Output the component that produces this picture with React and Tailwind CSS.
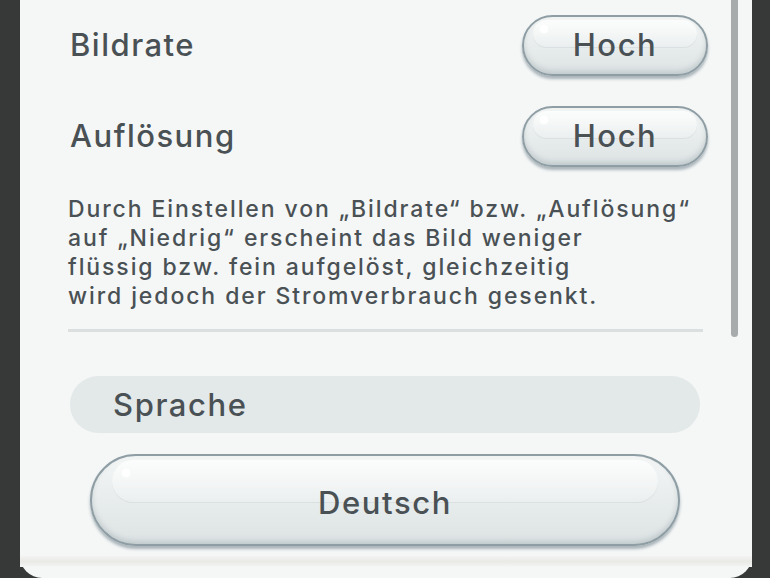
import React from "react";

const font = { fontFamily: 'Inter, "Liberation Sans", Arial, sans-serif' };

function Pill({ className, children, textClass, bandClass, dotClass }) {
  return (
    <div
      className={
        "relative flex items-center justify-center rounded-full border-2 border-[#8e9ea4] bg-[linear-gradient(180deg,#f4f6f6_0%,#eaeeee_40%,#dde3e4_100%)] shadow-[0_3px_3px_rgba(80,100,110,0.45),inset_0_-3px_5px_rgba(140,155,160,0.35)] " +
        className
      }
    >
      <div
        className={
          "pointer-events-none absolute top-[3px] h-[48%] rounded-full bg-[linear-gradient(180deg,rgba(255,255,255,0.7),rgba(255,255,255,0.15))] shadow-[0_1px_0_rgba(205,213,215,0.5)] " +
          bandClass
        }
      />
      <div
        className={
          "pointer-events-none absolute h-[8px] w-[8px] rounded-full bg-white shadow-[0_0_2px_rgba(255,255,255,0.9)] " +
          dotClass
        }
      />
      <span className={"relative font-medium text-[#4a5155] " + textClass} style={font}>
        {children}
      </span>
    </div>
  );
}

export default function App() {
  return (
    <div className="h-[578px] w-[770px] overflow-hidden bg-[#363938]">
      <div className="relative ml-[20px] flex h-[578px] w-[732px] flex-col rounded-b-[22px] bg-[#f5f7f7] pl-[50px] pr-[44px]">
        <div className="absolute left-[711px] top-0 h-[337px] w-[7px] rounded-b-full bg-[#a8abab]" />
        <div className="absolute bottom-[11px] left-0 right-0 h-[11px] bg-[linear-gradient(180deg,#f3f4f3,#e9eae6,#f4f6f5)]" />

        <div className="mt-[15px] flex items-center justify-between">
          <span className="text-[31px] font-medium tracking-[1.5px] text-[#4a5155]" style={font}>
            Bildrate
          </span>
          <Pill
            className="h-[61px] w-[186px]"
            textClass="text-[31px] tracking-[1.6px]"
            bandClass="left-[9px] right-[9px]"
            dotClass="left-[16px] top-[8px]"
          >
            Hoch
          </Pill>
        </div>

        <div className="mt-[30px] flex items-center justify-between">
          <span className="text-[31px] font-medium tracking-[1.5px] text-[#4a5155]" style={font}>
            Auflösung
          </span>
          <Pill
            className="h-[61px] w-[186px]"
            textClass="text-[31px] tracking-[1.6px]"
            bandClass="left-[9px] right-[9px]"
            dotClass="left-[16px] top-[8px]"
          >
            Hoch
          </Pill>
        </div>

        <p
          className="-ml-[2px] mt-[28px] text-[23px] font-medium leading-[29px] tracking-[1.9px] text-[#4a5155]"
          style={font}
        >
          Durch Einstellen von „Bildrate“ bzw. „Auflösung“
          <br />
          auf „Niedrig“ erscheint das Bild weniger
          <br />
          flüssig bzw. fein aufgelöst, gleichzeitig
          <br />
          wird jedoch der Stromverbrauch gesenkt.
        </p>

        <div className="-ml-[2px] mr-[5px] mt-[18px] h-[3px] bg-[#dcdfdf]" />

        <div className="mr-[8px] mt-[44px] flex h-[57px] items-center rounded-full bg-[#e3e8e9] pl-[43px]">
          <span className="pt-[2px] text-[31px] font-medium tracking-[1.6px] text-[#4a5155]" style={font}>
            Sprache
          </span>
        </div>

        <div className="mt-[21px] flex pl-[20px]">
          <Pill
            className="h-[92px] w-[590px]"
            textClass="pt-[6px] text-[31px] tracking-[1.6px]"
            bandClass="left-[20px] right-[20px] top-[4px]"
            dotClass="left-[30px] top-[13px]"
          >
            Deutsch
          </Pill>
        </div>
      </div>
    </div>
  );
}
